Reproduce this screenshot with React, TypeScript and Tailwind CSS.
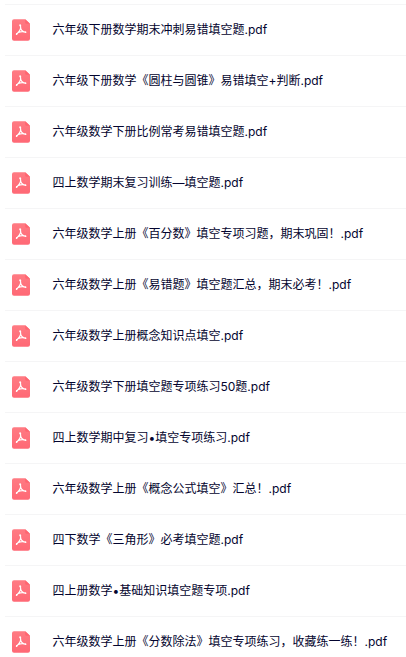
import React from 'react';

const files = [
  '六年级下册数学期末冲刺易错填空题.pdf',
  '六年级下册数学《圆柱与圆锥》易错填空+判断.pdf',
  '六年级数学下册比例常考易错填空题.pdf',
  '四上数学期末复习训练—填空题.pdf',
  '六年级数学上册《百分数》填空专项习题，期末巩固！.pdf',
  '六年级数学上册《易错题》填空题汇总，期末必考！.pdf',
  '六年级数学上册概念知识点填空.pdf',
  '六年级数学下册填空题专项练习50题.pdf',
  '四上数学期中复习•填空专项练习.pdf',
  '六年级数学上册《概念公式填空》汇总！.pdf',
  '四下数学《三角形》必考填空题.pdf',
  '四上册数学•基础知识填空题专项.pdf',
  '六年级数学上册《分数除法》填空专项练习，收藏练一练！.pdf',
];

const PdfIcon = () => (
  <svg className="h-[22px] w-[18px] shrink-0" viewBox="0 0 18 22" fill="none">
    <defs>
      <linearGradient id="pdf-bg" x1="0" y1="0" x2="0" y2="22" gradientUnits="userSpaceOnUse">
        <stop stopColor="#ff7b83" />
        <stop offset="1" stopColor="#ff6875" />
      </linearGradient>
    </defs>
    <path d="M2 .3h11.2l4.8 4.5V19.7a2 2 0 0 1-2 2H2a2 2 0 0 1-2-2V2.3a2 2 0 0 1 2-2z" fill="url(#pdf-bg)" />
    <path d="M13.2.3L18 4.8h-3.4a1.4 1.4 0 0 1-1.4-1.4z" fill="#ff6570" />
    <path
      d="M8 6c1.4 2.2.9 5.4-3.6 9.4M8.9 9.6c.5 1.9 2 3.2 4.8 3.6M6.4 13.4c2.2-.8 4.6-1 7.3-.2"
      stroke="#fff"
      strokeWidth="1.2"
      strokeLinecap="round"
      strokeLinejoin="round"
    />
    <circle cx="8.3" cy="6.4" r=".9" fill="#fff" />
    <circle cx="4.7" cy="14.9" r=".8" fill="#fff" />
    <circle cx="13.5" cy="13.2" r=".8" fill="#fff" />
  </svg>
);

const FileRow = ({ name }: { name: string }) => (
  <li className="flex h-[51px] items-center border-t border-[#f5f5f6] pl-[7px]">
    <PdfIcon />
    <span className="ml-[22.5px] whitespace-nowrap text-xs text-[#03042e]">{name}</span>
  </li>
);

const App = () => {
  return (
    <div className="h-screen overflow-hidden bg-white pt-1 pl-[5px] font-[Inter,'Noto_Sans_CJK_SC',sans-serif]" lang="zh-CN">
      <ul>
        {files.map((name) => (
          <FileRow key={name} name={name} />
        ))}
      </ul>
    </div>
  );
};

export default App;
